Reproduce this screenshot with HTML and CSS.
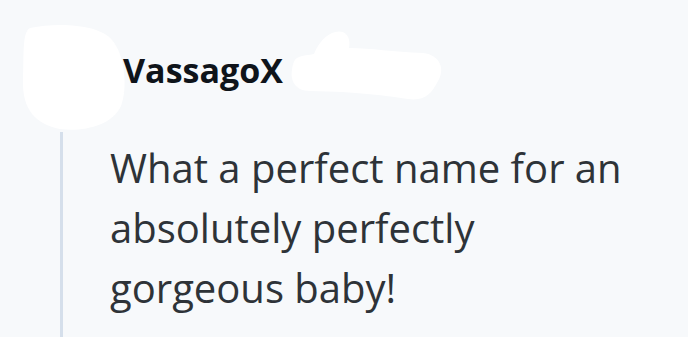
FILE: index.html
```html
<!DOCTYPE html>
<html lang="en">
<head>
  <meta charset="UTF-8">
  <meta name="viewport" content="width=device-width, initial-scale=1.0">
  <title>Comment</title>
  <link rel="stylesheet" href="styles.css">
</head>
<body>
  <div class="comment">
    <div class="comment-header">
      <svg class="avatar" viewBox="20 22 104 110" width="104" height="110">
        <path d="M30,28 C60,22 100,25 112,40 C125,55 128,88 121,106 C112,126 82,132 60,129 C36,124 22,110 23,80 C24,55 22,32 30,28 Z" fill="#fff"/>
      </svg>
      <span class="author">VassagoX</span>
      <svg class="redacted" viewBox="290 28 154 74" width="154" height="74">
        <path d="M297,58 C302,55 310,55 314,54 C320,38 333,29 343,32 C350,35 350,44 349,48 C372,48 392,52 423,53 C441,55 445,70 438,81 C431,95 424,101 408,99 C380,95 360,92 310,91 C295,91 290,80 292,70 C293,62 295,59 297,58 Z" fill="#fff"/>
      </svg>
    </div>
    <div class="comment-thread">
      <p class="comment-body">What a perfect name for an absolutely perfectly gorgeous baby!</p>
    </div>
  </div>
</body>
</html>
```

FILE: styles.css
```css
html, body {
  margin: 0;
  height: 100%;
  background: #f7f9fb;
}
body {
  font-family: "Open Sans", "Noto Sans", sans-serif;
  overflow: hidden;
}
.comment {
  padding: 22px 0 0 20px;
}
.comment-header {
  display: flex;
  align-items: flex-start;
}
.avatar {
  display: block;
  overflow: visible;
  flex-shrink: 0;
}
.author {
  margin-top: 28px;
  margin-left: -1px;
  font-size: 34px;
  line-height: 40px;
  font-weight: 700;
  color: #0f141a;
}
.redacted {
  display: block;
  overflow: visible;
  margin-top: 6px;
  margin-left: 7px;
}
.comment-thread {
  margin-left: 40px;
  border-left: 3px solid #d5dfeb;
  padding: 6px 0 20px 47px;
}
.comment-body {
  margin: 0;
  width: 530px;
  font-size: 40px;
  line-height: 60px;
  color: #2e3338;
}
```
